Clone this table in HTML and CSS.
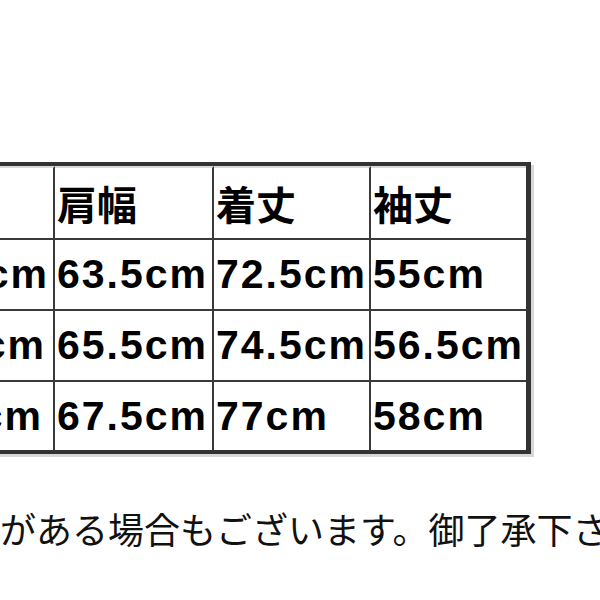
FILE: index.html
```html
<!DOCTYPE html>
<html lang="ja">
<head>
<meta charset="utf-8">
<title>サイズ表</title>
<link rel="stylesheet" href="styles.css">
</head>
<body>
<div class="page">
  <div class="size-table">
    <div class="cell head">身幅</div>
    <div class="cell head">肩幅</div>
    <div class="cell head">着丈</div>
    <div class="cell head last-col">袖丈</div>

    <div class="cell first r1">55.5cm</div>
    <div class="cell">63.5cm</div>
    <div class="cell">72.5cm</div>
    <div class="cell last-col">55cm</div>

    <div class="cell first r2">57.5cm</div>
    <div class="cell">65.5cm</div>
    <div class="cell">74.5cm</div>
    <div class="cell last-col">56.5cm</div>

    <div class="cell first r3 last-row">59.5cm</div>
    <div class="cell last-row">67.5cm</div>
    <div class="cell last-row">77cm</div>
    <div class="cell last-col last-row">58cm</div>
  </div>
  <p class="note">がある場合もございます。御了承下さい。</p>
</div>
</body>
</html>
```

FILE: styles.css
```css
html, body {
  margin: 0;
  padding: 0;
  background: #ffffff;
}

body {
  width: 600px;
  height: 600px;
  overflow: hidden;
}

.page {
  padding-top: 162px;
}

.size-table {
  display: inline-grid;
  grid-template-columns: 160px 159px 157px 155px;
  grid-template-rows: 74px 71px 71px 68px;
  margin-left: -110px;
  border-top: 4px solid #333333;
  border-right: 5px solid #333333;
  border-bottom: 4px solid #333333;
  border-left: 5px solid #333333;
  box-shadow: 3px 3px 0 #d8d8d8;
  font-family: "Liberation Sans", "Noto Sans CJK JP", sans-serif;
  font-weight: bold;
  font-size: 41px;
  letter-spacing: 2px;
  color: #000000;
}

.cell {
  box-sizing: border-box;
  display: flex;
  align-items: center;
  padding-left: 2px;
  white-space: nowrap;
  overflow: hidden;
  border-right: 2px solid #3a3a3a;
  border-bottom: 2px solid #3a3a3a;
}

.head {
  border-top: 2px solid #dadada;
  font-family: "Noto Sans CJK JP", sans-serif;
  font-size: 40px;
  letter-spacing: 0;
}

.last-col {
  border-right: none;
}

.last-row {
  border-bottom: none;
}

.first {
  justify-content: flex-end;
}

.first.r1 { padding-right: 4px; }
.first.r2 { padding-right: 7px; }
.first.r3 { padding-right: 10px; }

.note {
  margin: 56px 0 0 0;
  font-family: "Noto Sans CJK JP", sans-serif;
  font-weight: 400;
  font-size: 36px;
  line-height: 36px;
  color: #111111;
  white-space: nowrap;
}
```
